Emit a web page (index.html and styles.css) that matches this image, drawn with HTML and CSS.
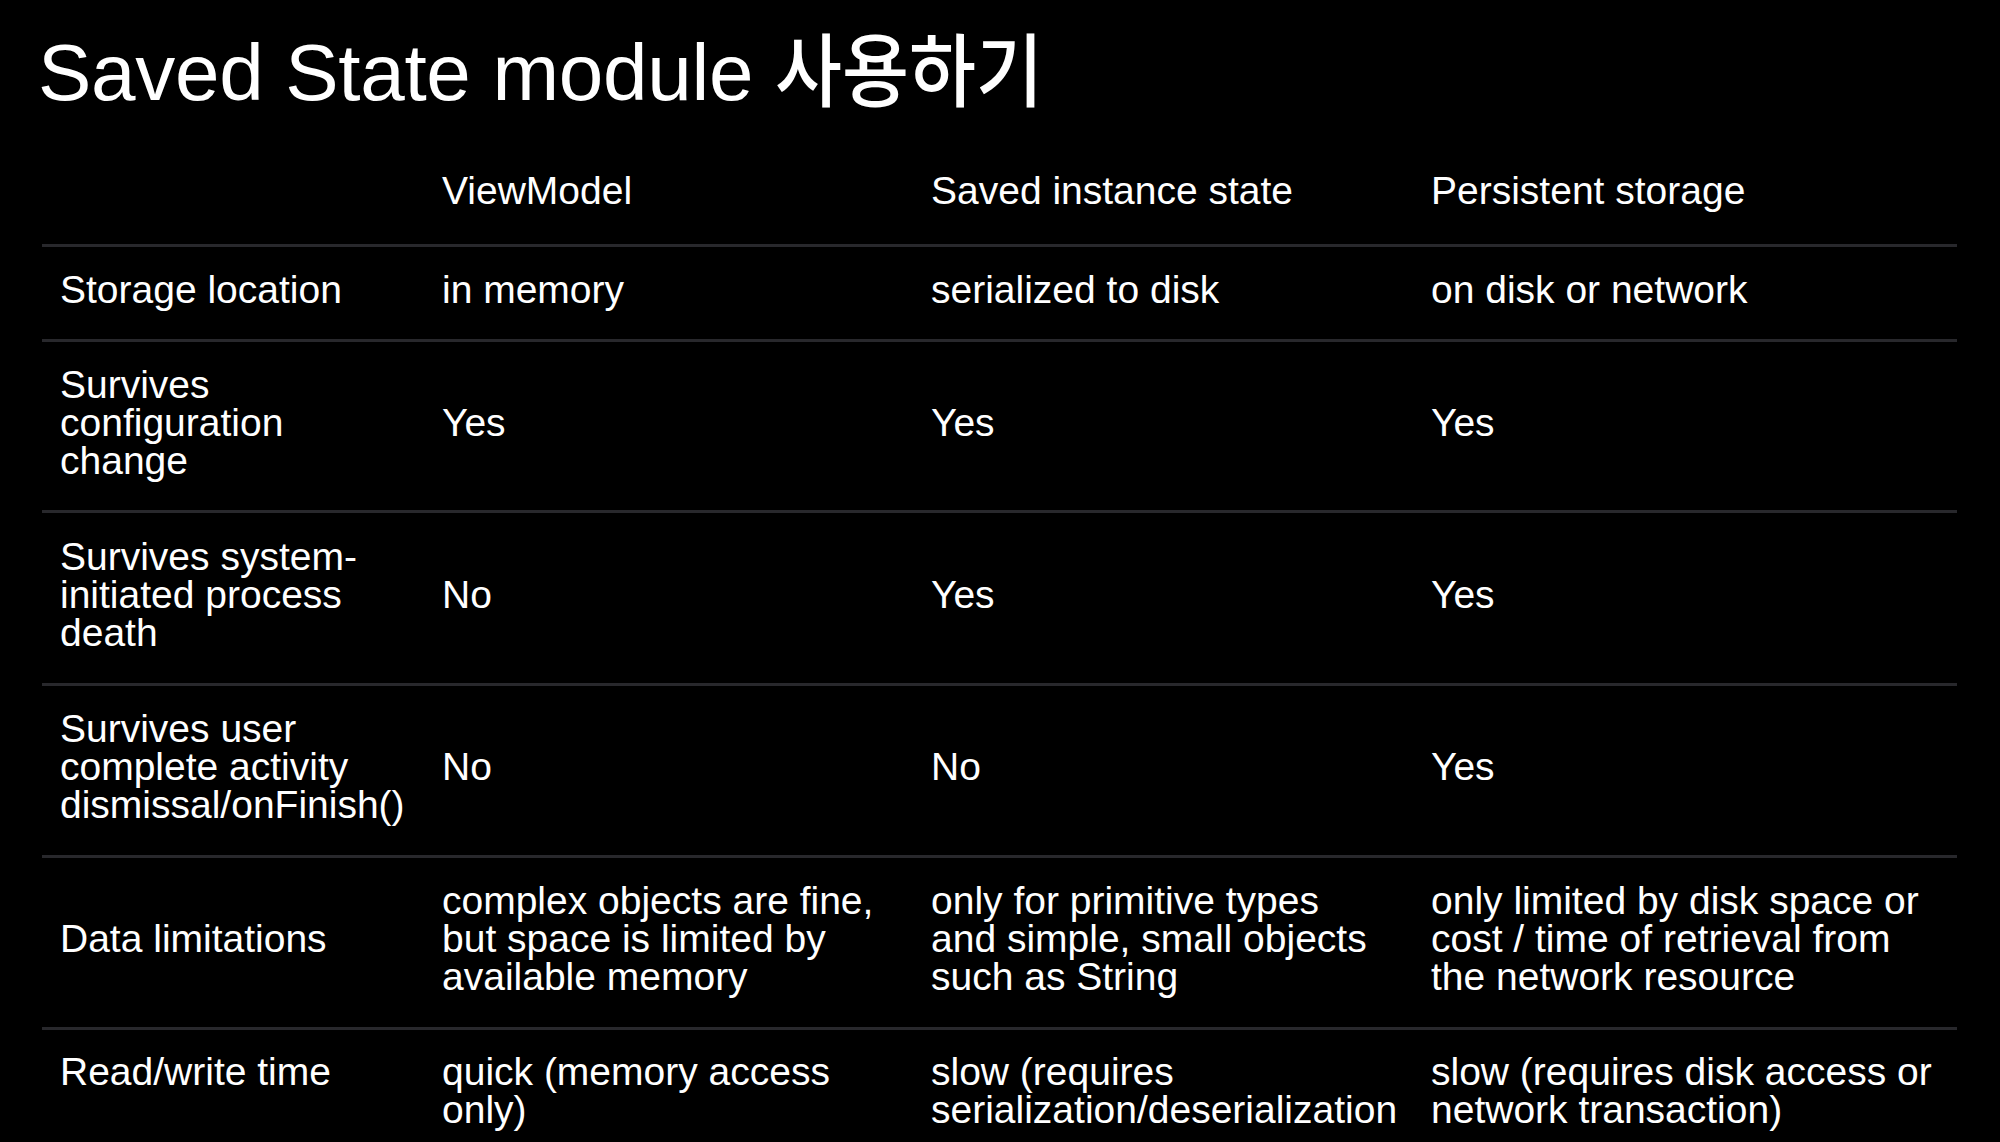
FILE: index.html
```html
<!DOCTYPE html>
<html lang="ko">
<head>
<meta charset="utf-8">
<title>Saved State module 사용하기</title>
<link rel="stylesheet" href="styles.css">
</head>
<body>
<div class="slide">
  <h1 class="title">Saved State module <span class="ko">사용하기</span></h1>
  <div class="table">
    <div class="row head">
      <div class="cell"></div>
      <div class="cell">ViewModel</div>
      <div class="cell">Saved instance state</div>
      <div class="cell">Persistent storage</div>
    </div>
    <div class="row r1">
      <div class="cell">Storage location</div>
      <div class="cell">in memory</div>
      <div class="cell">serialized to disk</div>
      <div class="cell">on disk or network</div>
    </div>
    <div class="row r2">
      <div class="cell">Survives<br>configuration<br>change</div>
      <div class="cell">Yes</div>
      <div class="cell">Yes</div>
      <div class="cell">Yes</div>
    </div>
    <div class="row r3">
      <div class="cell">Survives system-<br>initiated process<br>death</div>
      <div class="cell">No</div>
      <div class="cell">Yes</div>
      <div class="cell">Yes</div>
    </div>
    <div class="row r4">
      <div class="cell">Survives user<br>complete activity<br>dismissal/onFinish()</div>
      <div class="cell">No</div>
      <div class="cell">No</div>
      <div class="cell">Yes</div>
    </div>
    <div class="row r5">
      <div class="cell">Data limitations</div>
      <div class="cell">complex objects are fine,<br>but space is limited by<br>available memory</div>
      <div class="cell">only for primitive types<br>and simple, small objects<br>such as String</div>
      <div class="cell">only limited by disk space or<br>cost / time of retrieval from<br>the network resource</div>
    </div>
    <div class="row r6">
      <div class="cell">Read/write time</div>
      <div class="cell">quick (memory access<br>only)</div>
      <div class="cell">slow (requires<br>serialization/deserialization</div>
      <div class="cell">slow (requires disk access or<br>network transaction)</div>
    </div>
  </div>
</div>
</body>
</html>
```

FILE: styles.css
```css
html, body {
  margin: 0;
  padding: 0;
  background: #000;
}

body {
  width: 2000px;
  height: 1142px;
  overflow: hidden;
  font-family: "Liberation Sans", "Noto Sans CJK KR", Arial, sans-serif;
  color: #fff;
}

.slide {
  padding: 25px 43px 0 42px;
}

.title {
  margin: 0 0 0 -4px;
  height: 80px;
  font-size: 80px;
  line-height: 80px;
  font-weight: normal;
  letter-spacing: -0.3px;
  white-space: nowrap;
}

.title .ko {
  display: inline-block;
  font-family: "Noto Sans CJK KR", sans-serif;
  font-weight: 500;
  transform: scaleX(0.91);
  transform-origin: left center;
  letter-spacing: 0;
}

.table {
  margin-top: 44px;
  width: 1915px;
}

.row {
  display: grid;
  grid-template-columns: 382px 489px 500px 544px;
  align-items: center;
  box-sizing: border-box;
  padding-bottom: 7px;
  font-size: 39px;
  line-height: 38px;
}

.row + .row {
  border-top: 3px solid #28282c;
}

.cell {
  padding-left: 18px;
  white-space: nowrap;
}

.head { height: 95px; padding-bottom: 12px; }
.r1 { height: 95px; }
.r2 { height: 171px; }
.r3 { height: 173px; }
.r4 { height: 172px; }
.r5 { height: 172px; }
.r6 {
  height: 173px;
  align-items: start;
  padding: 23px 0 0;
}
```
